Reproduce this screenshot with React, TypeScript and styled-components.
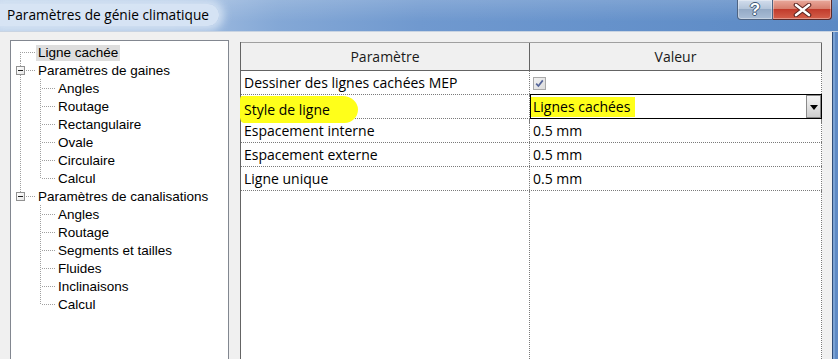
import React from 'react';
import styled, { createGlobalStyle } from 'styled-components';

const GlobalStyle = createGlobalStyle`
  html, body { margin: 0; padding: 0; overflow: hidden; background: #f0f0f0; }
  *, *::before, *::after { box-sizing: border-box; }
`;

const Window = styled.div`
  width: 838px;
  height: 359px;
  display: flex;
  flex-direction: column;
  overflow: hidden;
  background: #f0f0f0;
`;

const TitleBar = styled.div`
  height: 31px;
  flex: none;
  display: flex;
  justify-content: space-between;
  align-items: flex-start;
  background:
    linear-gradient(180deg, rgba(255,255,255,0.16) 0%, rgba(255,255,255,0) 70%),
    linear-gradient(90deg, #b9cfe9 0%, #a7c1e3 20%, #84a8d6 33%, #7099cf 50%, #6692cb 72%, #5b89c4 100%);
`;

const Title = styled.div`
  margin: 4px 0 0 0;
  height: 22px;
  padding: 0 10px 0 7px;
  font-family: 'Open Sans', 'Noto Sans', sans-serif;
  font-size: 13.7px;
  line-height: 22px;
  color: #000;
  background: rgba(216, 229, 244, 0.95);
  border-radius: 0 12px 12px 0;
  box-shadow: 0 0 9px 5px rgba(216, 229, 244, 0.85);
`;

const Caption = styled.div`
  display: flex;
  margin-right: 6px;
`;

const CaptionButton = styled.div<{ $kind: 'help' | 'close' }>`
  height: 20px;
  width: ${p => (p.$kind === 'help' ? 36 : 59)}px;
  display: flex;
  align-items: center;
  justify-content: center;
  border: 1px solid ${p => (p.$kind === 'help' ? '#4d6382' : '#5a2a2a')};
  border-top: none;
  border-left-width: ${p => (p.$kind === 'help' ? 1 : 0)}px;
  border-radius: ${p => (p.$kind === 'help' ? '0 0 0 4px' : '0 0 4px 0')};
  background: ${p =>
    p.$kind === 'help'
      ? 'linear-gradient(180deg, #d2dded 0%, #b4c5da 45%, #94aac6 50%, #a9bdd6 100%)'
      : 'linear-gradient(180deg, #e9a99c 0%, #d8806f 45%, #c23c2c 50%, #d4604c 100%)'};
  box-shadow: inset 0 0 0 1px rgba(255,255,255,0.35);
`;

const HelpGlyph = styled.span`
  font-family: 'Liberation Sans', Arial, sans-serif;
  font-weight: bold;
  font-size: 17px;
  line-height: 18px;
  color: #fff;
  text-shadow: 1px 0 0 #3c5675, -1px 0 0 #3c5675, 0 1px 0 #3c5675, 0 -1px 0 #3c5675;
`;

const Main = styled.div`
  flex: 1;
  display: flex;
  min-height: 0;
  border-top: 1px solid #c9d4e2;
`;

const Body = styled.div`
  flex: 1;
  display: flex;
  gap: 11px;
  padding: 8px 0 0 10px;
  background: #f0f0f0;
  min-height: 0;
`;

const FrameEdge = styled.div`
  width: 6px;
  flex: none;
  background: linear-gradient(90deg, #2f4d78 0 1px, #7aa2d4 1px 3px, #5f8ac4 3px);
`;

const TreePanel = styled.div`
  width: 219px;
  flex: none;
  border: 1px solid #828790;
  border-bottom: none;
  background: #fff;
  padding-top: 2px;
`;

const TreeRow = styled.div`
  height: 18px;
  display: flex;
  align-items: stretch;
`;

type V = 'none' | 'full' | 'top' | 'bottom';

const Guide = styled.span<{ $v: V; $connector?: boolean }>`
  position: relative;
  flex: none;
  width: ${p => (p.$connector ? 25 : 20)}px;
  display: flex;
  align-items: center;
  padding-left: 5px;
  &::before {
    content: '';
    position: absolute;
    left: 9px;
    width: 1px;
    top: ${p => (p.$v === 'bottom' ? '9px' : '0')};
    bottom: ${p => (p.$v === 'top' ? '9px' : '0')};
    display: ${p => (p.$v === 'none' ? 'none' : 'block')};
    background: repeating-linear-gradient(to bottom, #a0a0a0 0 1px, transparent 1px 2px);
  }
  &::after {
    content: '';
    position: absolute;
    left: 11px;
    right: 0;
    top: 9px;
    height: 1px;
    display: ${p => (p.$connector ? 'block' : 'none')};
    background: repeating-linear-gradient(to right, #a0a0a0 0 1px, transparent 1px 2px);
  }
`;

const Expander = styled.span`
  position: relative;
  z-index: 1;
  width: 9px;
  height: 9px;
  border: 1px solid #919191;
  background: linear-gradient(135deg, #ffffff 0%, #e6e6e6 100%);
  display: flex;
  align-items: center;
  justify-content: center;
  margin-top: 1px;
  &::after {
    content: '';
    width: 5px;
    height: 1px;
    background: #1e1e1e;
  }
`;

const TreeLabel = styled.span<{ $selected?: boolean }>`
  align-self: center;
  height: 16px;
  margin-top: 1px;
  padding: 0 2px;
  font-family: 'Liberation Sans', Arial, sans-serif;
  font-size: 13.5px;
  line-height: 16px;
  color: #000;
  white-space: nowrap;
  background: ${p => (p.$selected ? '#dedede' : 'transparent')};
`;

const Grid = styled.div`
  width: 582px;
  flex: none;
  margin-top: 2px;
  display: flex;
  flex-direction: column;
  background: #fff;
  border-left: 1px solid #646464;
  font-family: 'Open Sans', 'Noto Sans', sans-serif;
  font-size: 14px;
  color: #000;
`;

const HeaderRow = styled.div`
  display: grid;
  grid-template-columns: 289px 292px;
  height: 29px;
  border-top: 1px solid #a0a0a0;
  border-bottom: 1px solid #646464;
  background: #f0f0f0;
`;

const HeaderCell = styled.div`
  display: flex;
  align-items: center;
  justify-content: center;
  border-right: 1px solid #646464;
  color: #1a1a1a;
  padding-bottom: 1px;
`;

const Row = styled.div<{ $fill?: boolean }>`
  display: grid;
  grid-template-columns: 289px 292px;
  height: ${p => (p.$fill ? 'auto' : '24px')};
  flex: ${p => (p.$fill ? 1 : 'none')};
  border-bottom: ${p => (p.$fill ? 'none' : '1px dotted #7a7a7a')};
`;

const Cell = styled.div<{ $flush?: boolean }>`
  position: relative;
  display: flex;
  align-items: center;
  padding-left: ${p => (p.$flush ? 0 : 3)}px;
  border-right: 1px dotted #7a7a7a;
  white-space: nowrap;
  min-width: 0;
`;

const Marker = styled.span`
  display: inline-flex;
  align-items: center;
  height: 27px;
  margin: 1px 0 0 -4px;
  padding: 0 28px 0 4px;
  background: #ffff1a;
  border-radius: 2px 16px 14px 4px / 4px 14px 14px 6px;
`;

const CheckBox = styled.span`
  width: 13px;
  height: 13px;
  margin-top: 1px;
  border: 1px solid #a9a9a9;
  background: linear-gradient(135deg, #f2f2f2 0%, #dcdcdc 100%);
  display: flex;
  align-items: center;
  justify-content: center;
`;

const Combo = styled.div`
  position: relative;
  z-index: 1;
  align-self: stretch;
  display: flex;
  align-items: stretch;
  width: calc(100% + 1px);
  margin: -1px -1px -1px 0;
  height: 25px;
  border: 1px solid #000;
  background: #fff;
`;

const ComboText = styled.span`
  align-self: center;
  height: 20px;
  line-height: 20px;
  padding: 0 5px 0 2px;
  background: #ffff1a;
`;

const DropButton = styled.span`
  margin-left: auto;
  width: 15px;
  display: flex;
  align-items: center;
  justify-content: center;
  border: 1px solid #8a8a8a;
  background: linear-gradient(180deg, #f4f4f4 0%, #e2e2e2 50%, #cdcdcd 100%);
  &::after {
    content: '';
    border-left: 4px solid transparent;
    border-right: 4px solid transparent;
    border-top: 5px solid #000;
    margin-top: 1px;
  }
`;

type TreeItem = { label: string; guides: V[]; box?: boolean; selected?: boolean };

const tree: TreeItem[] = [
  { label: 'Ligne cachée', guides: ['bottom'], selected: true },
  { label: 'Paramètres de gaines', guides: ['full'], box: true },
  { label: 'Angles', guides: ['full', 'full'] },
  { label: 'Routage', guides: ['full', 'full'] },
  { label: 'Rectangulaire', guides: ['full', 'full'] },
  { label: 'Ovale', guides: ['full', 'full'] },
  { label: 'Circulaire', guides: ['full', 'full'] },
  { label: 'Calcul', guides: ['full', 'top'] },
  { label: 'Paramètres de canalisations', guides: ['top'], box: true },
  { label: 'Angles', guides: ['none', 'full'] },
  { label: 'Routage', guides: ['none', 'full'] },
  { label: 'Segments et tailles', guides: ['none', 'full'] },
  { label: 'Fluides', guides: ['none', 'full'] },
  { label: 'Inclinaisons', guides: ['none', 'full'] },
  { label: 'Calcul', guides: ['none', 'top'] },
];

const CloseIcon = () => (
  <svg width="19" height="14" viewBox="0 0 19 14">
    <path d="M3 2 L16 12 M16 2 L3 12" stroke="#5a2320" strokeWidth="4.6" strokeLinecap="round" />
    <path d="M3 2 L16 12 M16 2 L3 12" stroke="#ffffff" strokeWidth="2.6" strokeLinecap="round" />
  </svg>
);

const CheckIcon = () => (
  <svg width="11" height="11" viewBox="0 0 11 11">
    <path d="M2.2 5.6 L4.4 8 L8.8 2.4" stroke="#55659a" strokeWidth="1.7" fill="none" />
  </svg>
);

export default function App() {
  return (
    <>
      <GlobalStyle />
      <Window>
        <TitleBar>
          <Title>Paramètres de génie climatique</Title>
          <Caption>
            <CaptionButton $kind="help">
              <HelpGlyph>?</HelpGlyph>
            </CaptionButton>
            <CaptionButton $kind="close">
              <CloseIcon />
            </CaptionButton>
          </Caption>
        </TitleBar>
        <Main>
          <Body>
            <TreePanel>
              {tree.map((item, i) => (
                <TreeRow key={i}>
                  {item.guides.map((g, j) => {
                    const last = j === item.guides.length - 1;
                    return (
                      <Guide key={j} $v={g} $connector={last}>
                        {last && item.box ? <Expander /> : null}
                      </Guide>
                    );
                  })}
                  <TreeLabel $selected={item.selected}>{item.label}</TreeLabel>
                </TreeRow>
              ))}
            </TreePanel>
            <Grid>
              <HeaderRow>
                <HeaderCell>Paramètre</HeaderCell>
                <HeaderCell>Valeur</HeaderCell>
              </HeaderRow>
              <Row>
                <Cell>Dessiner des lignes cachées MEP</Cell>
                <Cell>
                  <CheckBox>
                    <CheckIcon />
                  </CheckBox>
                </Cell>
              </Row>
              <Row>
                <Cell>
                  <Marker>Style de ligne</Marker>
                </Cell>
                <Cell $flush>
                  <Combo>
                    <ComboText>Lignes cachées</ComboText>
                    <DropButton />
                  </Combo>
                </Cell>
              </Row>
              <Row>
                <Cell>Espacement interne</Cell>
                <Cell>0.5 mm</Cell>
              </Row>
              <Row>
                <Cell>Espacement externe</Cell>
                <Cell>0.5 mm</Cell>
              </Row>
              <Row>
                <Cell>Ligne unique</Cell>
                <Cell>0.5 mm</Cell>
              </Row>
              <Row $fill>
                <Cell />
                <Cell />
              </Row>
            </Grid>
          </Body>
          <FrameEdge />
        </Main>
      </Window>
    </>
  );
}
